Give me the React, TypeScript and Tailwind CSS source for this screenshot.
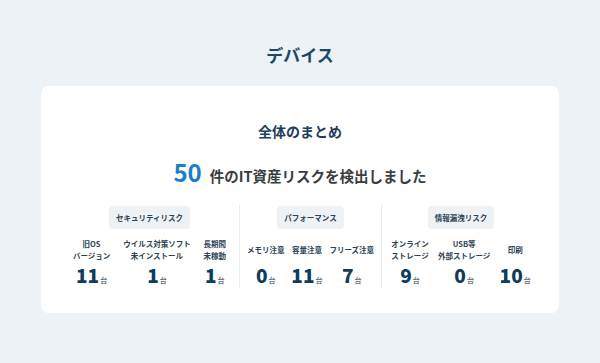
import React from "react";

type Item = { label: string[]; value: number };
type Section = { title: string; width: string; items: Item[] };

const sections: Section[] = [
  {
    title: "セキュリティリスク",
    width: "w-[179px]",
    items: [
      { label: ["旧OS", "バージョン"], value: 11 },
      { label: ["ウイルス対策ソフト", "未インストール"], value: 1 },
      { label: ["長期間", "未稼動"], value: 1 },
    ],
  },
  {
    title: "パフォーマンス",
    width: "w-[142px]",
    items: [
      { label: ["メモリ注意"], value: 0 },
      { label: ["容量注意"], value: 11 },
      { label: ["フリーズ注意"], value: 7 },
    ],
  },
  {
    title: "情報漏洩リスク",
    width: "w-[159px]",
    items: [
      { label: ["オンライン", "ストレージ"], value: 9 },
      { label: ["USB等", "外部ストレージ"], value: 0 },
      { label: ["印刷"], value: 10 },
    ],
  },
];

const font = { fontFamily: '"Noto Sans CJK JP", "Noto Sans", sans-serif' };

export default function App() {
  return (
    <div className="h-[363px] w-[600px] bg-[#edf2f6] pt-[43px]" style={font}>
      <h1 className="text-center text-[17px] font-bold leading-[24px] text-[#1b4866]">デバイス</h1>
      <div className="mx-[41px] mt-[19px] h-[227px] rounded-[8px] bg-white pt-[35px]">
        <div className="text-center text-[14px] font-bold leading-[20px] text-[#1e3f5a]">全体のまとめ</div>
        <div className="mt-[15px] flex h-[32px] items-baseline justify-center">
          <span className="mr-[8px] text-[24px] font-bold leading-[32px] text-[#1b7ec6]">50</span>
          <span className="text-[14.5px] font-bold leading-[32px] text-[#3a3d40]">件のIT資産リスクを検出しました</span>
        </div>
        <div className="mx-[19px] mt-[17px] flex">
          {sections.map((s, i) => (
            <div
              key={s.title}
              className={`${s.width} flex flex-col items-center pt-[1px] ${i > 0 ? "border-l border-[#e6edf2]" : ""}`}
            >
              <div className="flex h-[23px] items-center rounded-[4px] bg-[#eef2f5] px-[7px] text-[7.5px] font-bold text-[#2c4356]">
                {s.title}
              </div>
              <div className="mt-[9px] flex w-full justify-evenly">
                {s.items.map((it) => (
                  <div key={it.label.join("")} className="flex flex-col items-center">
                    <div className="flex h-[24px] flex-col justify-center text-center text-[7.5px] font-bold leading-[12px] text-[#2c4356]">
                      {it.label.map((l) => (
                        <div key={l}>{l}</div>
                      ))}
                    </div>
                    <div className="flex h-[26px] items-baseline">
                      <span className="text-[19px] font-black leading-[25px] text-[#0f3b5c]">{it.value}</span>
                      <span className="ml-[1px] text-[7px] font-bold text-[#6b7680]">台</span>
                    </div>
                  </div>
                ))}
              </div>
            </div>
          ))}
        </div>
      </div>
    </div>
  );
}
